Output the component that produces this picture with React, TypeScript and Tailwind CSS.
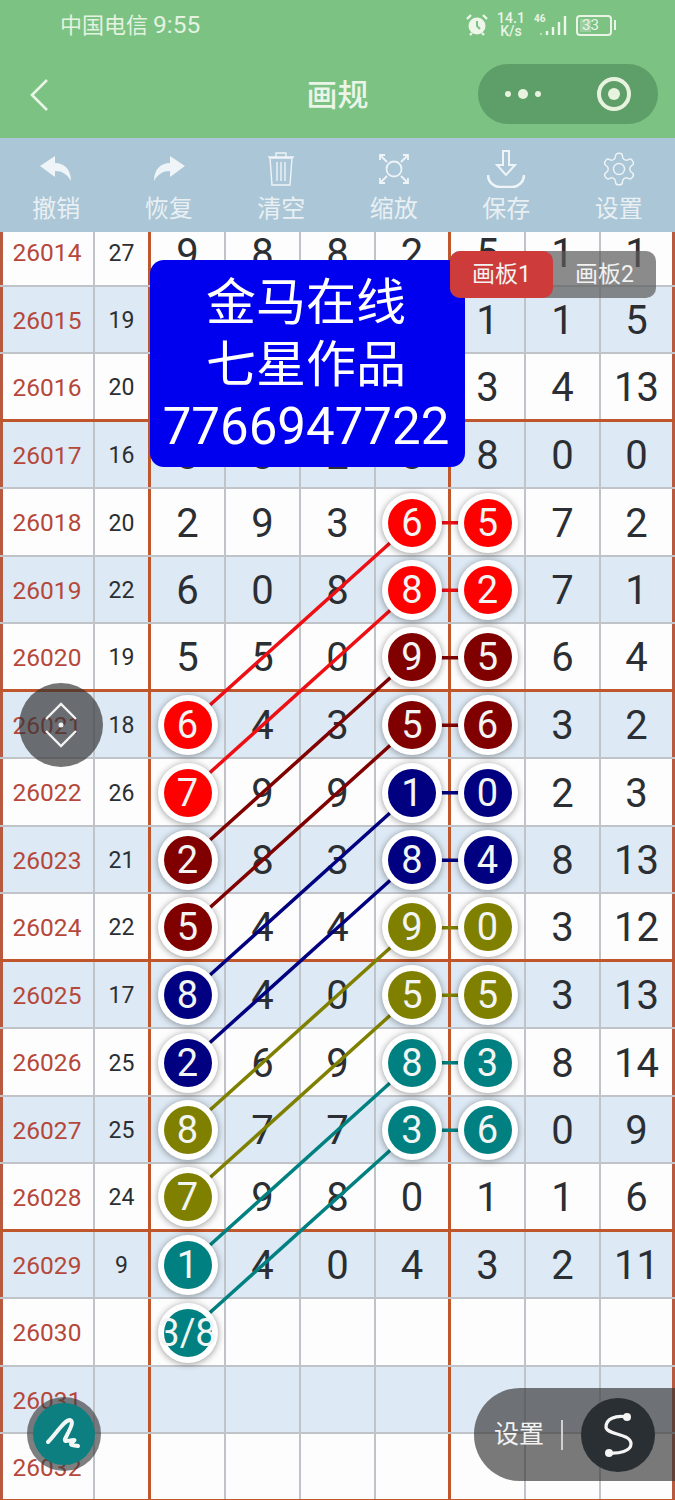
import React from "react";

type Tone = "red" | "maroon" | "navy" | "olive" | "teal";
type Cell = string | { b: string; t: Tone };

const toneBg: Record<Tone, string> = {
  red: "bg-[#ff0000]",
  maroon: "bg-[#800000]",
  navy: "bg-[#000080]",
  olive: "bg-[#808000]",
  teal: "bg-[#008080]",
};
const toneHex: Record<Tone, string> = {
  red: "#ee0f14",
  maroon: "#800000",
  navy: "#000080",
  olive: "#808000",
  teal: "#008080",
};

const b = (v: string, t: Tone): Cell => ({ b: v, t });

const rows: { id: string; sum: string; cells: Cell[] }[] = [
  { id: "26014", sum: "27", cells: ["9", "8", "8", "2", "5", "1", "1"] },
  { id: "26015", sum: "19", cells: ["1", "5", "2", "7", "1", "1", "5"] },
  { id: "26016", sum: "20", cells: ["4", "3", "6", "1", "3", "4", "13"] },
  { id: "26017", sum: "16", cells: ["8", "8", "2", "8", "8", "0", "0"] },
  { id: "26018", sum: "20", cells: ["2", "9", "3", b("6", "red"), b("5", "red"), "7", "2"] },
  { id: "26019", sum: "22", cells: ["6", "0", "8", b("8", "red"), b("2", "red"), "7", "1"] },
  { id: "26020", sum: "19", cells: ["5", "5", "0", b("9", "maroon"), b("5", "maroon"), "6", "4"] },
  { id: "26021", sum: "18", cells: [b("6", "red"), "4", "3", b("5", "maroon"), b("6", "maroon"), "3", "2"] },
  { id: "26022", sum: "26", cells: [b("7", "red"), "9", "9", b("1", "navy"), b("0", "navy"), "2", "3"] },
  { id: "26023", sum: "21", cells: [b("2", "maroon"), "8", "3", b("8", "navy"), b("4", "navy"), "8", "13"] },
  { id: "26024", sum: "22", cells: [b("5", "maroon"), "4", "4", b("9", "olive"), b("0", "olive"), "3", "12"] },
  { id: "26025", sum: "17", cells: [b("8", "navy"), "4", "0", b("5", "olive"), b("5", "olive"), "3", "13"] },
  { id: "26026", sum: "25", cells: [b("2", "navy"), "6", "9", b("8", "teal"), b("3", "teal"), "8", "14"] },
  { id: "26027", sum: "25", cells: [b("8", "olive"), "7", "7", b("3", "teal"), b("6", "teal"), "0", "9"] },
  { id: "26028", sum: "24", cells: [b("7", "olive"), "9", "8", "0", "1", "1", "6"] },
  { id: "26029", sum: "9", cells: [b("1", "teal"), "4", "0", "4", "3", "2", "11"] },
  { id: "26030", sum: "", cells: [b("3/8", "teal"), "", "", "", "", "", ""] },
  { id: "26031", sum: "", cells: ["", "", "", "", "", "", ""] },
  { id: "26032", sum: "", cells: ["", "", "", "", "", "", ""] },
];

const ROW = 67.5;
const cy = (i: number) => ROW * i + ROW / 2;
const X1 = 187.5;
const X4 = 412.5;
const X5 = 487.5;

const links: [number, number, Tone][] = [
  [7, 4, "red"],
  [8, 5, "red"],
  [9, 6, "maroon"],
  [10, 7, "maroon"],
  [11, 8, "navy"],
  [12, 9, "navy"],
  [13, 10, "olive"],
  [14, 11, "olive"],
  [15, 12, "teal"],
  [16, 13, "teal"],
];

function Ball({ value, tone }: { value: string; tone: Tone }) {
  return (
    <div className="relative z-20 flex h-[60px] w-[60px] items-center justify-center rounded-full bg-white shadow-[0_1px_7px_rgba(0,0,0,0.4)]">
      <div
        className={`flex h-[48px] w-[48px] items-center justify-center overflow-visible rounded-full pt-[1px] text-[38px] text-[#f2f5f3] ${toneBg[tone]}`}
      >
        <span className="whitespace-nowrap">{value}</span>
      </div>
    </div>
  );
}

function Grid() {
  return (
    <div className="relative mt-[-13px] font-['Roboto',sans-serif]">
      {rows.map((r, i) => {
        const thick = i % 4 === 2 || i === rows.length - 1;
        const blue = i % 2 === 1;
        return (
          <div
            key={r.id}
            className={`grid h-[67.5px] grid-cols-[95px_56px_repeat(6,75px)_74px] pt-[2px] ${
              thick ? "border-b-[3px] border-b-[#c0562b]" : "border-b-2 border-b-[#c0c4c8]"
            } ${blue ? "bg-[#dde9f4]" : "bg-[#fdfdfd]"}`}
          >
            <div className="mt-[-2px] flex items-center justify-center border-r-2 border-l-[3px] border-r-[#c0c4c8] border-l-[#b85a40] pt-[2px] pr-[2px] text-[24.5px] text-[#b5483a]">
              <span className="pt-[2px]">{r.id}</span>
            </div>
            <div className="mt-[-2px] flex items-center justify-center border-r-[3px] border-r-[#c0562b] pt-[4px] text-[23px] text-[#2b2f33]">
              {r.sum}
            </div>
            {r.cells.map((c, j) => (
              <div
                key={j}
                className={`mt-[-2px] flex items-center justify-center pt-[2px] text-[40px] text-[#2b2f33] ${
                  j === 3 ? "border-r-[3px] border-r-[#c0562b]" : j === 6 ? "border-r-[3px] border-r-[#b85a40]" : "border-r-2 border-r-[#c0c4c8]"
                }`}
              >
                {typeof c === "string" ? <span className="pt-[2px]">{c}</span> : <Ball value={c.b} tone={c.t} />}
              </div>
            ))}
          </div>
        );
      })}
      <svg className="pointer-events-none absolute top-0 left-0 z-10" width="675" height="1283" viewBox="0 0 675 1283">
        {links.map(([from, to, t]) => (
          <line key={from} x1={X1} y1={cy(from)} x2={X4} y2={cy(to)} stroke={toneHex[t]} strokeWidth="3.5" />
        ))}
        {[4, 5, 6, 7, 8, 9, 10, 11, 12, 13].map((i) => {
          const c = rows[i].cells[3];
          return typeof c === "string" ? null : (
            <line key={i} x1={X4} y1={cy(i)} x2={X5} y2={cy(i)} stroke={toneHex[c.t]} strokeWidth="3.5" />
          );
        })}
      </svg>
    </div>
  );
}

function StatusIcons() {
  return (
    <div className="flex items-center text-[#e9f4e6]">
      <svg width="26" height="26" viewBox="0 0 26 26" className="mr-[7px]">
        <circle cx="13" cy="14" r="8.5" fill="#eef6ea" />
        <path d="M13 9v5l3 3" stroke="#7bc283" strokeWidth="2" fill="none" />
        <path d="M3 7l4-4M23 7l-4-4M6 23l2-2M20 23l-2-2" stroke="#eef6ea" strokeWidth="2.4" />
      </svg>
      <div className="mr-[9px] flex w-[28px] flex-col items-center text-[14px] leading-[13px] font-medium">
        <span>14.1</span>
        <span>K/s</span>
      </div>
      <div className="relative mr-[9px] h-[24px] w-[33px]">
        <span className="absolute top-[1px] left-0 text-[10px] leading-[10px] font-bold">46</span>
        <svg width="33" height="24" viewBox="0 0 33 24" className="absolute top-0 left-0">
          <path d="M7 22v-2" stroke="#b9dcb8" strokeWidth="2" />
          <path d="M13 22v-4M19 22v-8M25 22v-13M31 22v-19" stroke="#eef6ea" strokeWidth="2.4" />
        </svg>
      </div>
      <div className="flex items-center">
        <div className="flex h-[21px] w-[36px] items-center rounded-[4px] border-2 border-[#e9f4e6] pl-[2px]">
          <div className="flex h-[13px] w-[11px] bg-[#9ccf9f]" />
          <span className="ml-[-9px] text-[15px] leading-none">33</span>
        </div>
        <div className="ml-[2px] h-[10px] w-[2px] bg-[#e9f4e6]" />
      </div>
    </div>
  );
}

const iconCls = "h-[38px] w-[38px]";
const toolIcons = [
  <svg key="u" className={iconCls} viewBox="0 0 38 38" fill="#eef4f7">
    <path d="M3 16L18 6v7c9 0 16 6 16 18-4-7-9-10-16-10v6z" />
  </svg>,
  <svg key="r" className={iconCls} viewBox="0 0 38 38" fill="#eef4f7">
    <path d="M35 16L20 6v7c-9 0-16 6-16 18 4-7 9-10 16-10v6z" />
  </svg>,
  <svg key="t" className={iconCls} viewBox="0 0 38 38" fill="none" stroke="#eef4f7" strokeWidth="1.4">
    <path d="M6 7h26M14 7V3h10v4M8 8l2 27h18l2-27zM15 12v19M19 12v19M23 12v19" />
  </svg>,
  <svg key="z" className={iconCls} viewBox="0 0 38 38" fill="none" stroke="#eef4f7" strokeWidth="1.8">
    <circle cx="19" cy="19" r="7.500" />
    <path d="M5 10V5h5M28 5h5v5M5 28v5h5M33 28v5h-5M5 5l7 7M33 5l-7 7M5 33l7-7M33 33l-7-7" />
  </svg>,
  <svg key="s" className={iconCls} viewBox="0 0 38 38" fill="none" stroke="#eef4f7" strokeWidth="2.6">
    <path d="M16 1v14h-6l9 10 9-10h-6V1z" strokeWidth="2" />
    <path d="M1 25c0 7 6 12 12 12h12c6 0 12-5 12-12" />
  </svg>,
  <svg key="g" className={iconCls} viewBox="0 0 24 24" fill="none" stroke="#eef4f7" strokeWidth="0.9" strokeLinecap="round" strokeLinejoin="round">
    <path d="M12.22 2h-.44a2 2 0 0 0-2 2v.18a2 2 0 0 1-1 1.73l-.43.25a2 2 0 0 1-2 0l-.15-.08a2 2 0 0 0-2.73.73l-.22.38a2 2 0 0 0 .73 2.73l.15.1a2 2 0 0 1 1 1.72v.51a2 2 0 0 1-1 1.74l-.15.09a2 2 0 0 0-.73 2.73l.22.38a2 2 0 0 0 2.73.73l.15-.08a2 2 0 0 1 2 0l.43.25a2 2 0 0 1 1 1.73V20a2 2 0 0 0 2 2h.44a2 2 0 0 0 2-2v-.18a2 2 0 0 1 1-1.73l.43-.25a2 2 0 0 1 2 0l.15.08a2 2 0 0 0 2.73-.73l.22-.39a2 2 0 0 0-.73-2.73l-.15-.08a2 2 0 0 1-1-1.74v-.5a2 2 0 0 1 1-1.74l.15-.09a2 2 0 0 0 .73-2.73l-.22-.38a2 2 0 0 0-2.73-.73l-.15.08a2 2 0 0 1-2 0l-.43-.25a2 2 0 0 1-1-1.73V4a2 2 0 0 0-2-2z" />
    <circle cx="12" cy="12" r="3.500" />
  </svg>,
];
const toolLabels = ["撤销", "恢复", "清空", "缩放", "保存", "设置"];

export default function App() {
  return (
    <div className="relative h-[1500px] w-[675px] overflow-hidden bg-white font-['Roboto','Noto_Sans_CJK_SC',sans-serif]">
      <div className="relative z-30 h-[138px] bg-[#7bc283]">
        <div className="flex h-[50px] items-center justify-between pr-[59px] pl-[60px]">
          <div className="flex items-center text-[#e4f2e0]">
            <span className="text-[22px]">中国电信</span>
            <span className="ml-[5px] text-[24.5px]">9:55</span>
          </div>
          <StatusIcons />
        </div>
        <div className="relative flex h-[88px] items-center justify-center pt-[4px]">
          <svg width="24" height="36" viewBox="0 0 24 36" className="absolute top-[27px] left-[27px]" fill="none" stroke="#eaf5e8" strokeWidth="2.6">
            <path d="M20 3L5 18l15 15" />
          </svg>
          <span className="text-[31px] font-medium text-[#eaf5e8]">画规</span>
          <div className="absolute top-[14px] right-[17px] flex h-[60px] w-[180px] items-center rounded-full bg-[#5e9e68] pl-[27px]">
            <div className="flex w-[36px] items-center justify-between">
              <div className="h-[6px] w-[6px] rounded-full bg-[#e8f3df]" />
              <div className="h-[10px] w-[10px] rounded-full bg-[#e8f3df]" />
              <div className="h-[6px] w-[6px] rounded-full bg-[#e8f3df]" />
            </div>
            <div className="ml-[56px] flex h-[34px] w-[34px] items-center justify-center rounded-full border-[4px] border-[#e8f3df]">
              <div className="h-[12px] w-[12px] rounded-full bg-[#e8f3df]" />
            </div>
          </div>
        </div>
      </div>

      <div className="relative z-30 grid h-[94px] grid-cols-6 bg-[#abc6d6] pt-[12px]">
        {toolLabels.map((label, i) => (
          <div key={label} className="flex flex-col items-center">
            {toolIcons[i]}
            <span className="mt-[5px] text-[24px] leading-[32px] text-[#e8f0f4]">{label}</span>
          </div>
        ))}
      </div>

      <Grid />

      <div className="absolute top-[260px] left-[150px] z-30 flex h-[207px] w-[315px] flex-col items-center justify-center rounded-[14px] bg-[#0000ee] pt-[3px] pr-[3px] text-[50px] leading-[62px] text-white">
        <span>金马在线</span>
        <span>七星作品</span>
        <span className="text-[51px]">7766947722</span>
      </div>

      <div className="absolute top-[251px] left-[450px] z-40 flex h-[47px] w-[206px] rounded-[10px] bg-[rgba(90,90,90,0.7)] text-[23px] text-[#f2f2f2]">
        <div className="flex w-[103px] items-center justify-center rounded-[10px] bg-[#cd3b3b] pt-[2px]">画板1</div>
        <div className="flex w-[103px] items-center justify-center pt-[2px]">画板2</div>
      </div>

      <div className="absolute top-[683px] left-[19px] z-40 flex h-[84px] w-[84px] items-center justify-center rounded-full bg-[rgba(50,50,50,0.68)]">
        <svg width="34" height="46" viewBox="0 0 34 46" fill="none" stroke="#f2f2f2" strokeWidth="2.4">
          <path d="M2 17L17 2l15 15M2 29l15 15 15-15" />
          <circle cx="17" cy="23" r="2.500" fill="#f2f2f2" stroke="none" />
        </svg>
      </div>

      <div className="absolute top-[1397px] left-[27px] z-40 flex h-[74px] w-[74px] items-center justify-center rounded-full bg-[rgba(60,60,60,0.65)]">
        <div className="flex h-[62px] w-[62px] items-center justify-center rounded-full bg-[#0d7f80]">
          <svg width="38" height="38" viewBox="0 0 38 38" fill="none" stroke="#f2f7f5" strokeWidth="4" strokeLinecap="round" strokeLinejoin="round">
            <path d="M3 27C11 19 19 5 25 5c5 1-1 11-5 19-1 4 4 1 9 1 2 0-3 2-3 4 0 2 4 1 7 2" />
          </svg>
        </div>
      </div>

      <div className="absolute top-[1388px] left-[474px] z-40 flex h-[93px] w-[201px] items-center rounded-l-[46px] bg-[rgba(50,50,50,0.65)]">
        <span className="ml-[20px] text-[25px] text-[#f2f2f2]">设置</span>
        <div className="ml-[17px] h-[30px] w-[2px] bg-[#d0d0d0]" />
        <div className="ml-[18px] flex h-[74px] w-[74px] items-center justify-center rounded-full bg-[#2a2f33]">
          <svg width="34" height="46" viewBox="0 0 34 46" fill="none" stroke="#f5f5f5" strokeWidth="3.2" strokeLinecap="round">
            <path d="M26 5C14 3 5 7 5 15c0 8 25 6 25 17 0 7-12 10-22 9" />
            <circle cx="26" cy="5" r="4" fill="#f5f5f5" stroke="none" />
            <circle cx="8" cy="41" r="4" fill="#f5f5f5" stroke="none" />
          </svg>
        </div>
      </div>
    </div>
  );
}
